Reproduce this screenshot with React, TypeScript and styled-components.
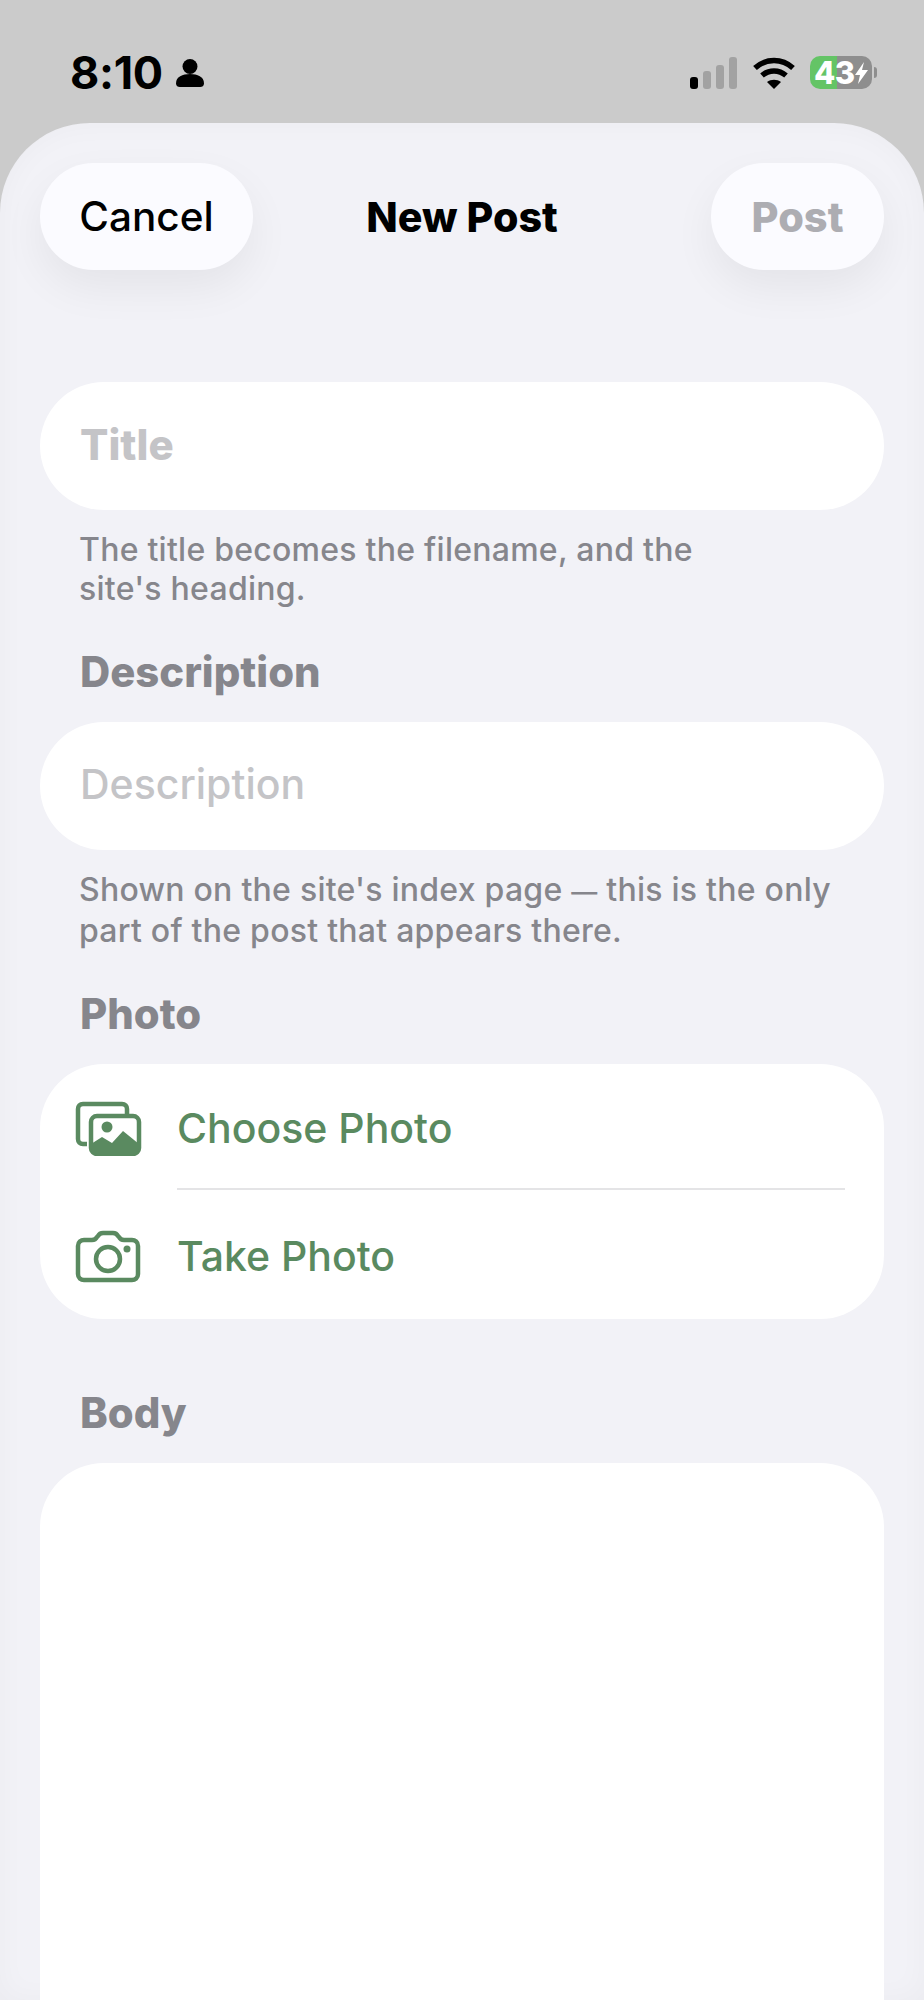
import styled, { createGlobalStyle } from 'styled-components'

const GlobalStyle = createGlobalStyle`
    html, body {
        margin: 0;
        padding: 0;
        background: #cbcbcb;
    }

    body {
        font-family: 'Inter', 'Liberation Sans', sans-serif;
        -webkit-font-smoothing: antialiased;
    }
`

const Screen = styled.div`
    width: 924px;
    height: 2000px;
    overflow: hidden;
    background: #cbcbcb;
`

const StatusBar = styled.div`
    height: 123px;
    box-sizing: border-box;
    padding: 50px 52px 0 70px;
    display: flex;
    justify-content: space-between;
    align-items: flex-start;
`

const StatusLeft = styled.div`
    display: flex;
    align-items: center;
    gap: 13px;
`

const Clock = styled.span`
    font-size: 45px;
    line-height: 46px;
    font-weight: 700;
    color: #000;
    letter-spacing: -0.3px;
`

const StatusRight = styled.div`
    display: flex;
    align-items: center;
    gap: 15px;
    margin-top: 6px;
`

const Battery = styled.div`
    position: relative;
    width: 62px;
    height: 33px;
    border-radius: 10px;
    background: linear-gradient(90deg, #64c466 0 43%, #8e8e8e 43% 100%);
    display: flex;
    align-items: center;
    padding-left: 4px;
    box-sizing: border-box;
    color: #fff;
    font-size: 31px;
    font-weight: 800;
    letter-spacing: -0.5px;

    &::after {
        content: '';
        position: absolute;
        right: -5px;
        top: 11px;
        width: 3px;
        height: 11px;
        border-radius: 0 4px 4px 0;
        background: #8e8e8e;
    }
`

const Sheet = styled.div`
    height: 1877px;
    box-sizing: border-box;
    background: #f2f2f7;
    border-radius: 90px 90px 0 0;
    box-shadow: inset 0 0 30px rgba(0, 0, 0, 0.03);
    padding: 40px 40px 0;
`

const Header = styled.header`
    display: grid;
    grid-template-columns: 1fr auto 1fr;
    align-items: center;
    height: 107px;
    margin-bottom: 112px;
`

const PillButton = styled.button<{ $disabled?: boolean }>`
    height: 107px;
    width: ${p => (p.$disabled ? '173px' : '213px')};
    justify-self: ${p => (p.$disabled ? 'end' : 'start')};
    border: none;
    border-radius: 54px;
    background: #fbfbff;
    box-shadow: 0 18px 44px rgba(0, 0, 0, 0.06);
    font-family: inherit;
    font-size: ${p => (p.$disabled ? '41.5px' : '40.5px')};
    font-weight: ${p => (p.$disabled ? 800 : 500)};
    color: ${p => (p.$disabled ? '#adadb2' : '#000')};
    padding: 0;
`

const HeaderTitle = styled.h1`
    margin: 0;
    font-size: 41.2px;
    font-weight: 800;
    color: #000;
`

const Field = styled.div<{ $spaced?: boolean }>`
    height: 128px;
    margin-top: ${p => (p.$spaced ? '26px' : '0')};
    box-sizing: border-box;
    border-radius: 64px;
    background: #fff;
    padding: 0 40px 4px;
    display: flex;
    align-items: center;
`

const Placeholder = styled.span<{ $bold?: boolean }>`
    font-size: ${p => (p.$bold ? '42px' : '41px')};
    font-weight: ${p => (p.$bold ? 800 : 500)};
    color: #c4c4c7;
`

const Helper = styled.p`
    margin: 20px 39px 0;
    font-size: 32px;
    line-height: 39px;
    font-weight: 500;
    letter-spacing: 0.25px;
    color: #86868c;
`

const Dash = styled.span`
    font-size: 26px;
`

const SectionLabel = styled.h2<{ $gap: number }>`
    margin: ${p => p.$gap}px 40px 0;
    font-size: 41.8px;
    line-height: 48px;
    font-weight: 800;
    color: #86868c;
`

const Card = styled.div`
    margin-top: 26px;
    border-radius: 64px;
    background: #fff;
    height: 255px;
    display: grid;
    grid-template-rows: 124px 2px 1fr;
`

const ActionRow = styled.div`
    margin-left: 35px;
    padding-top: 3px;
    display: flex;
    align-items: center;
    gap: 34px;
`

const ActionIcon = styled.svg`
    width: 68px;
    height: 56px;
    flex: none;
`

const ActionLabel = styled.span`
    font-size: 41px;
    font-weight: 500;
    color: #5a8a60;
`

const Divider = styled.div`
    margin: 0 39px 0 137px;
    background: #e4e4e6;
`

const BodyCard = styled.div`
    margin-top: 26px;
    height: 700px;
    border-radius: 64px 64px 0 0;
    background: #fff;
`

const PersonIcon = () => (
    <svg width="28" height="30" viewBox="0 0 30 32" fill="#000">
        <circle cx="15" cy="9" r="8" />
        <path d="M0 27c0-7 7-10 15-10s15 3 15 10c0 3-2 4-4 4H4c-2 0-4-1-4-4z" />
    </svg>
)

const SignalIcon = () => (
    <svg width="48" height="32" viewBox="0 0 48 32">
        <rect x="0" y="20" width="8" height="12" rx="3" fill="#000" />
        <rect x="13" y="14" width="8" height="18" rx="3" fill="#a2a2a2" />
        <rect x="26" y="8" width="8" height="24" rx="3" fill="#a2a2a2" />
        <rect x="39" y="0" width="8" height="32" rx="3" fill="#a2a2a2" />
    </svg>
)

const WifiIcon = () => (
    <svg width="42" height="32" viewBox="0 0 42 32" fill="none" stroke="#000" strokeWidth="5.5">
        <path d="M2 11c11-10 27-10 38 0" />
        <path d="M9 18.5c7-6 17-6 24 0" />
        <path d="M21 32l-7-7c4-3 10-3 14 0z" fill="#000" stroke="none" />
    </svg>
)

const BoltIcon = () => (
    <svg width="13" height="22" viewBox="0 0 13 22" fill="#fff">
        <path d="M9 0L0 13h5l-2 9 10-14H7z" />
    </svg>
)

const LibraryIcon = () => (
    <ActionIcon viewBox="0 0 68 56" fill="none" stroke="#5a8a60" strokeWidth="4.5">
        <path d="M12 44H8c-3 0-5-2-5-5V9c0-3 2-5 5-5h39c3 0 5 2 5 5v5" />
        <rect x="16" y="16" width="48" height="38" rx="6" />
        <circle cx="32" cy="27" r="5.5" fill="#5a8a60" stroke="none" />
        <path d="M16 44l11-7 10 6 11-12 16 13v4c0 3-2 6-6 6H22c-4 0-6-3-6-6z" fill="#5a8a60" stroke="none" />
    </ActionIcon>
)

const CameraIcon = () => (
    <ActionIcon viewBox="0 0 68 56" fill="none" stroke="#5a8a60" strokeWidth="4.5">
        <path d="M9 12h8c3 0 4-1 5-3l1-1c1-2 3-3 5-3h10c2 0 4 1 5 3l1 1c1 2 2 3 5 3h8c3 0 6 2 6 6v28c0 4-3 6-6 6H9c-3 0-6-2-6-6V18c0-4 3-6 6-6z" />
        <circle cx="33" cy="31" r="12" />
        <circle cx="52" cy="21" r="3.5" fill="#5a8a60" stroke="none" />
    </ActionIcon>
)

const App = () => (
    <>
        <GlobalStyle />
        <Screen>
            <StatusBar>
                <StatusLeft>
                    <Clock>8:10</Clock>
                    <PersonIcon />
                </StatusLeft>
                <StatusRight>
                    <SignalIcon />
                    <WifiIcon />
                    <Battery>43<BoltIcon /></Battery>
                </StatusRight>
            </StatusBar>
            <Sheet>
                <Header>
                    <PillButton>Cancel</PillButton>
                    <HeaderTitle>New Post</HeaderTitle>
                    <PillButton $disabled>Post</PillButton>
                </Header>

                <Field><Placeholder $bold>Title</Placeholder></Field>
                <Helper>The title becomes the filename, and the<br />site's heading.</Helper>

                <SectionLabel $gap={40}>Description</SectionLabel>
                <Field $spaced><Placeholder>Description</Placeholder></Field>
                <Helper>Shown on the site's index page <Dash>—</Dash> this is the only<br />part of the post that appears there.</Helper>

                <SectionLabel $gap={40}>Photo</SectionLabel>
                <Card>
                    <ActionRow><LibraryIcon /><ActionLabel>Choose Photo</ActionLabel></ActionRow>
                    <Divider />
                    <ActionRow><CameraIcon /><ActionLabel>Take Photo</ActionLabel></ActionRow>
                </Card>

                <SectionLabel $gap={70}>Body</SectionLabel>
                <BodyCard />
            </Sheet>
        </Screen>
    </>
)

export default App
